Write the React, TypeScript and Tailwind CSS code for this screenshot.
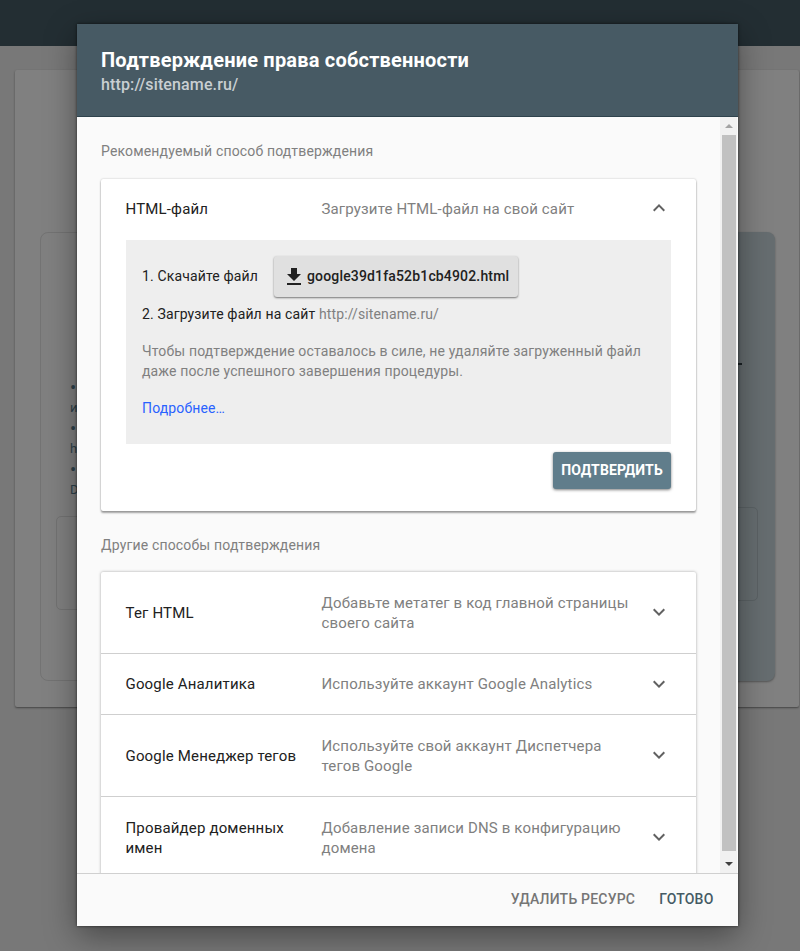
import React from 'react';
import { MdExpandLess, MdExpandMore, MdFileDownload } from 'react-icons/md';

interface Method {
  title: string;
  description: string;
  height: string;
}

const METHODS: Method[] = [
  { title: 'Тег HTML', description: 'Добавьте метатег в код главной страницы своего сайта', height: 'h-[82px]' },
  { title: 'Google Аналитика', description: 'Используйте аккаунт Google Analytics', height: 'h-[61px]' },
  { title: 'Google Менеджер тегов', description: 'Используйте свой аккаунт Диспетчера тегов Google', height: 'h-[82px]' },
  { title: 'Провайдер доменных имен', description: 'Добавление записи DNS в конфигурацию домена', height: 'h-[82px]' },
];

const MethodRow: React.FC<{ method: Method }> = ({ method }) => {
  const { title, description, height } = method;

  return (
    <div className={`${height} flex shrink-0 items-center border-b border-[#cfcfcf] pl-[24.5px] pr-[25px] text-[15px] leading-5`}>
      <div className="w-[196px] shrink-0 pr-5 tracking-[0.17px] text-[#212121]">{title}</div>
      <div className="w-[320px] shrink-0 tracking-[0.15px] text-[#808080]">{description}</div>
      <MdExpandMore className="mb-px ml-auto size-6 text-[#616161]" />
    </div>
  );
};

const Backdrop: React.FC = () => (
  <div className="h-full bg-[#787878]">
    <div className="h-[46px] bg-[#232e33]" />
    <div className="pl-[15px] pr-px pt-6">
      <div className="flex h-[637px] justify-between rounded-[2px] bg-[#808080] pb-[26px] pl-[25px] pr-6 pt-[162px] shadow-[0_1px_2px_#444]">
        <div className="w-[360px] rounded-[8px] border border-[#737373] pl-[15px] pt-[145px] text-[13px] leading-[20.4px] text-[#2f434c]">
          <div className="h-[138px] pl-[14px]">
            <div className="text-[18px]">•</div>
            <div>и</div>
            <div className="text-[18px]">•</div>
            <div>h</div>
            <div className="text-[18px]">•</div>
            <div>D</div>
          </div>
          <div className="h-[94px] w-80 rounded-[5px] border border-[#737373]" />
        </div>
        <div className="w-[360px] rounded-[8px] bg-[#666d70] pl-6 pr-[17px] pt-[131px] shadow-[0_1px_2px_#555]">
          <div className="mr-4 h-[2px] bg-[#1b2226]" />
          <div className="mt-[142px] h-[94px] rounded-[5px] border border-[#5b6265]" />
        </div>
      </div>
    </div>
  </div>
);

const Scrollbar: React.FC = () => (
  <div className="flex w-[17px] shrink-0 flex-col items-center bg-[#f1f1f1]">
    <div className="flex h-[18px] items-center">
      <div className="border-x-[4px] border-b-[4px] border-x-transparent border-b-[#a3a3a3]" />
    </div>
    <div className="w-[14px] flex-1 bg-[#c1c1c1]" />
    <div className="flex h-[22px] items-center pt-1">
      <div className="border-x-[4px] border-t-[4px] border-x-transparent border-t-[#404040]" />
    </div>
  </div>
);

const App: React.FC = () => {
  return (
    <div className="relative h-[951px] w-[800px] overflow-hidden font-['Roboto',sans-serif]">
      <Backdrop />

      <div className="absolute left-[77px] top-6 flex h-[902px] w-[661px] flex-col bg-[#fafafa] shadow-[0_10px_30px_rgba(0,0,0,0.4),0_0_3px_rgba(0,0,0,0.6)]">
        <header className="h-[93px] shrink-0 border-b border-[#2f434d] bg-[#475a64] px-6 pt-6">
          <h1 className="text-[20px] font-bold leading-[25px] tracking-[0.2px] text-white">Подтверждение права собственности</h1>
          <p className="text-[16px] font-medium leading-6 tracking-[0.13px] text-[#c9cfd2]">http://sitename.ru/</p>
        </header>

        <div className="flex min-h-0 flex-1">
          <div className="w-[643px] overflow-hidden pl-6 pr-6 pt-6">
            <p className="text-[14px] leading-5 tracking-[0.16px] text-[#808080]">Рекомендуемый способ подтверждения</p>

            <section className="mt-[18px] h-[332px] rounded-[2px] bg-white shadow-[0_2px_2px_rgba(0,0,0,0.35),0_0_2px_rgba(0,0,0,0.25)]">
              <div className="flex h-[61px] items-center pl-[24.5px] pr-[25px] text-[15px]">
                <div className="w-[196px] tracking-[0.17px] text-[#212121]">HTML-файл</div>
                <div className="tracking-[0.15px] text-[#808080]">Загрузите HTML-файл на свой сайт</div>
                <MdExpandLess className="mb-[3px] ml-auto size-6 text-[#616161]" />
              </div>

              <div className="mx-[25px] h-[204px] bg-[#eeeeee] pl-4 pt-4 text-[14px] leading-5 tracking-[0.14px] text-[#212121]">
                <div className="flex items-center">
                  <span className="w-[132px] pb-[2px]">1. Скачайте файл</span>
                  <button className="flex h-[41px] w-[244px] items-center rounded-[3px] bg-[#e0e0e0] pl-2 font-medium tracking-[0.16px] shadow-[0_1px_2px_rgba(0,0,0,0.5)]">
                    <MdFileDownload className="mr-px size-6 shrink-0" />
                    <span className="pb-[2px]">google39d1fa52b1cb4902.html</span>
                  </button>
                </div>
                <p className="mt-[7px]">
                  <span>2. Загрузите файл на сайт </span>
                  <span className="text-[#808080] tracking-[0.12px]">http://sitename.ru/</span>
                </p>
                <p className="mt-[17px] w-[520px] text-[#808080]">
                  Чтобы подтверждение оставалось в силе, не удаляйте загруженный файл даже после успешного завершения процедуры.
                </p>
                <a className="mt-[17px] block text-[#2962ff]">Подробнее…</a>
              </div>

              <div className="flex justify-end pr-[25px] pt-2">
                <button className="h-[37px] w-[118px] rounded-[3px] bg-[#607d8b] pb-px text-[14px] font-bold tracking-[0.12px] text-white shadow-[0_1px_3px_rgba(0,0,0,0.5)]">
                  ПОДТВЕРДИТЬ
                </button>
              </div>
            </section>

            <p className="mt-6 text-[14px] leading-5 tracking-[0.16px] text-[#808080]">Другие способы подтверждения</p>

            <section className="mt-[17px] flex flex-col rounded-[2px] bg-white shadow-[0_0_3px_rgba(0,0,0,0.35)]">
              {METHODS.map((method) => (
                <MethodRow key={method.title} method={method} />
              ))}
            </section>
          </div>
          <Scrollbar />
        </div>

        <footer className="flex h-[53px] shrink-0 items-center justify-end gap-6 border-t border-[#d0d0d0] pb-px pr-[24.5px] text-[14px] font-medium tracking-[0.2px]">
          <button className="text-[#757575]">УДАЛИТЬ РЕСУРС</button>
          <button className="text-[#455a64]">ГОТОВО</button>
        </footer>
      </div>
    </div>
  );
};

export default App;
